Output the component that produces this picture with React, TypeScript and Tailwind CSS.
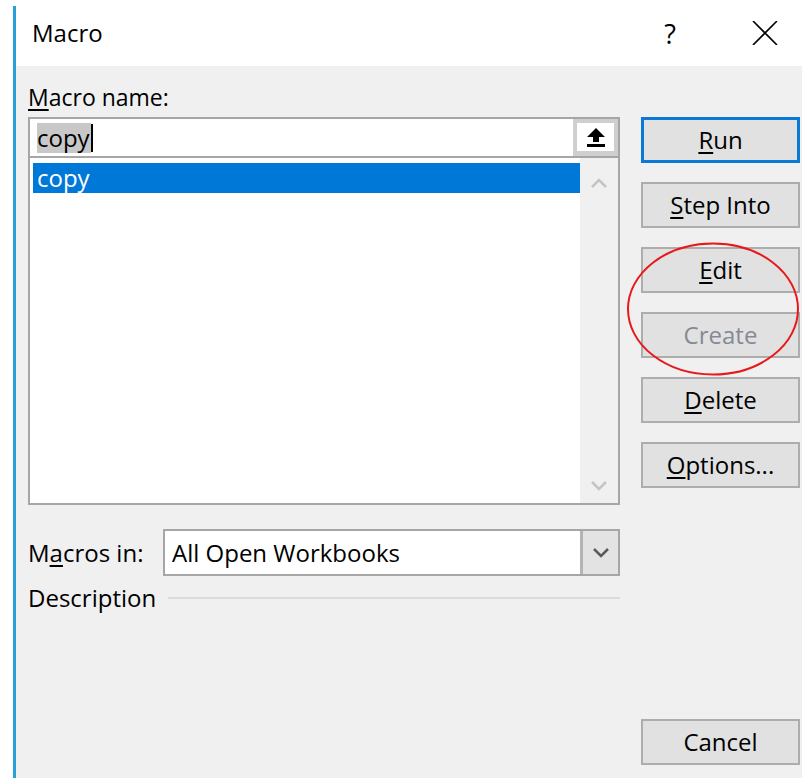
import React from 'react';

type BtnProps = {
  label: string
  hotkey?: number
  primary?: boolean
  disabled?: boolean
  className?: string
}

// draws a label with one letter underlined as the keyboard accelerator
const Accel = ({ label, hotkey }: { label: string; hotkey?: number }) => {
  if (hotkey === undefined) return <>{label}</>
  return (
    <>
      {label.slice(0, hotkey)}
      <span className="underline decoration-[1.5px] underline-offset-[3px]">{label[hotkey]}</span>
      {label.slice(hotkey + 1)}
    </>
  )
}

const DialogButton = ({ label, hotkey, primary, disabled, className }: BtnProps) => {
  return (
    <button
      className={
        'flex h-[46px] w-full items-center justify-center bg-[#e1e1e1] text-[24px] leading-[30px] ' +
        (primary ? 'border-[3px] border-[#0a78d6] ' : 'border-2 border-[#adadad] ') +
        (disabled ? 'text-[#858a92] ' : 'text-black ') +
        (className ?? '')
      }
    >
      <Accel label={label} hotkey={disabled ? undefined : hotkey} />
    </button>
  )
}

const UploadArrow = () => (
  <svg width="20" height="21" viewBox="0 0 20 21">
    <path d="M10 1 L19 10 L13 10 L13 15 L7 15 L7 10 L1 10 Z" fill="#000" />
    <rect x="1" y="17" width="18" height="3" fill="#000" />
  </svg>
)

const Chevron = ({ up, color }: { up?: boolean; color: string }) => (
  <svg width="18" height="11" viewBox="0 0 18 11">
    <path
      d={up ? 'M2 9 L9 2 L16 9' : 'M2 2 L9 9 L16 2'}
      fill="none"
      stroke={color}
      strokeWidth="2.5"
    />
  </svg>
)

export default function App() {
  return (
    <div className="relative h-[778px] w-[802px] bg-white pl-[13px] pt-[6px] font-['Open_Sans',sans-serif] text-black">
      <div className="flex h-full flex-col border-l-[3px] border-[#26a0da]">
        {/* title bar */}
        <div className="flex h-[60px] items-start bg-white pl-[16px] pt-[12px]">
          <span className="text-[24px] leading-[30px]">Macro</span>
          <span className="ml-auto mt-[1px] text-[27px] leading-[30px]">?</span>
          <svg className="ml-[76px] mr-[24px] mt-[3px]" width="26" height="24" viewBox="0 0 26 24">
            <path d="M1 0 L25 24 M25 0 L1 24" stroke="#000" strokeWidth="1.6" />
          </svg>
        </div>

        <div className="flex flex-1 gap-[21px] bg-[#f0f0f0] pl-[12px] pr-[2px]">
          {/* left column */}
          <div className="flex w-[592px] flex-col pt-[16px] text-[24px] leading-[30px]">
            <div className="mb-[5px] h-[30px] text-[23px]">
              <Accel label="Macro name:" hotkey={0} />
            </div>

            <div className="flex h-[41px] border-2 border-[#a6a6a6] bg-white">
              <div className="flex flex-1 items-center pl-[7px]">
                <span className="inline-block h-[30px] bg-[#c8c8c8] pr-[1px]">copy</span>
                <span className="h-[28px] w-[2px] bg-black" />
              </div>
              <div className="flex w-[45px] bg-[#cfcfcf] p-[4px] pb-[5px]">
                <div className="flex flex-1 items-center justify-center bg-white">
                  <UploadArrow />
                </div>
              </div>
            </div>

            <div className="flex h-[347px] border-2 border-t-0 border-[#a6a6a6] bg-white">
              <div className="flex-1 pl-[3px] pt-[5px]">
                <div className="h-[30px] bg-[#0078d7] pl-[4px] text-white">copy</div>
              </div>
              <div className="flex w-[38px] flex-col items-center justify-between bg-[#f0f0f0] pb-[12px] pt-[20px]">
                <Chevron up color="#c4c4c4" />
                <Chevron color="#c4c4c4" />
              </div>
            </div>

            <div className="mt-[24px] flex items-center">
              <div className="w-[135px]">
                M<span className="underline decoration-[1.5px] underline-offset-[3px]">a</span>cros in:
              </div>
              <div className="flex h-[47px] flex-1 border-2 border-[#a6a6a6] bg-white">
                <div className="flex flex-1 items-center pl-[7px]">All Open Workbooks</div>
                <div className="flex w-[38px] items-center justify-center border-l-[3px] border-[#b4b4b4] bg-[#e3e3e3]">
                  <Chevron color="#5a5a5a" />
                </div>
              </div>
            </div>

            <div className="mt-[7px] flex items-center">
              <span>Description</span>
              <div className="ml-[12px] h-[2px] flex-1 bg-[#dcdcdc]" />
            </div>
          </div>

          {/* right column */}
          <div className="flex w-[159px] flex-col gap-[19px] pb-[13px] pt-[51px]">
            <DialogButton label="Run" hotkey={0} primary />
            <DialogButton label="Step Into" hotkey={0} />
            <DialogButton label="Edit" hotkey={0} />
            <DialogButton label="Create" hotkey={0} disabled />
            <DialogButton label="Delete" hotkey={0} />
            <DialogButton label="Options..." hotkey={0} />
            <DialogButton label="Cancel" className="mt-auto" />
          </div>
        </div>
      </div>

      {/* hand-drawn highlight ring */}
      <svg className="absolute left-[627px] top-[242px]" width="174" height="136" viewBox="0 0 174 136">
        <ellipse cx="86" cy="67" rx="85" ry="65.5" fill="none" stroke="#e8191a" strokeWidth="2" />
      </svg>
    </div>
  )
}
